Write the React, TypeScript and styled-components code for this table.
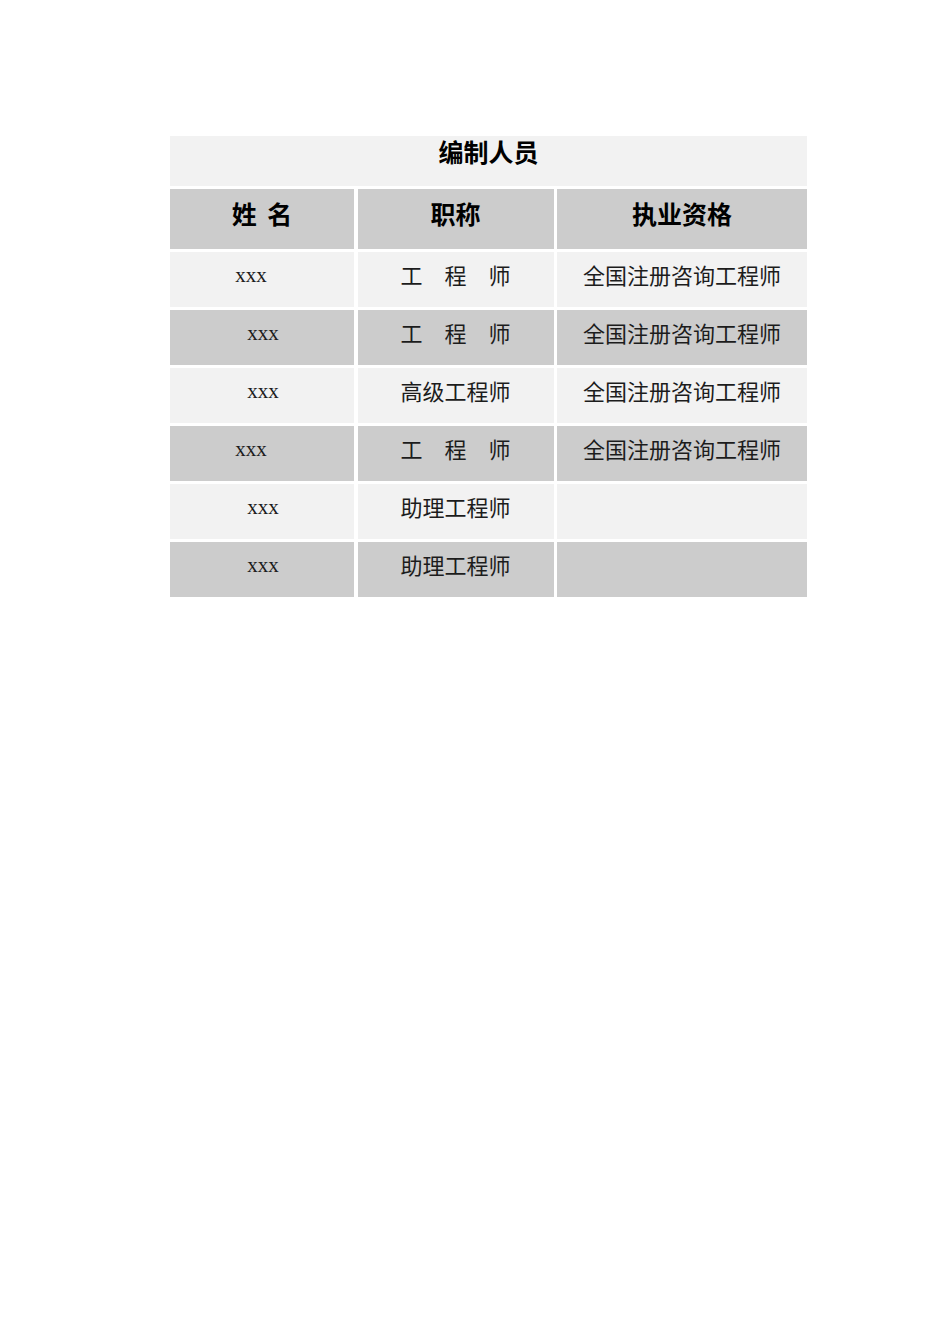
import React from "react";
import styled, { createGlobalStyle } from "styled-components";

const GlobalStyle = createGlobalStyle`
  html, body {
    margin: 0;
    padding: 0;
    background: #ffffff;
  }
  body {
    font-family: "Noto Sans CJK SC", "Noto Sans", sans-serif;
    color: #000;
  }
`;

const Page = styled.div`
  width: 950px;
  min-height: 1344px;
  padding: 136px 0 0 170px;
  box-sizing: border-box;
`;

const Grid = styled.div`
  display: grid;
  width: 637px;
  grid-template-columns: 184px 196px 250px;
  grid-template-rows: 49.5px 59.5px;
  grid-auto-rows: 54.5px;
  gap: 3.5px;
`;

const TitleCell = styled.div`
  grid-column: 1 / -1;
  box-sizing: border-box;
  padding-top: 0px;
  background: #f2f2f2;
  text-align: center;
  font-family: "Noto Sans CJK SC", sans-serif;
  font-weight: 700;
  font-size: 25px;
  line-height: 30px;
`;

const HeadCell = styled.div`
  box-sizing: border-box;
  padding-top: 9px;
  background: #cccccc;
  text-align: center;
  font-family: "Noto Sans CJK SC", sans-serif;
  font-weight: 700;
  font-size: 25px;
  line-height: 30px;
`;

const Gap = styled.span`
  display: inline-block;
  width: 0.42em;
`;

const BodyCell = styled.div<{ $dark: boolean; $shift?: number; $latin?: boolean }>`
  box-sizing: border-box;
  padding-top: ${(p) => (p.$latin ? "8px" : "7px")};
  background: ${(p) => (p.$dark ? "#cccccc" : "#f2f2f2")};
  text-align: center;
  font-family: ${(p) =>
    p.$latin
      ? `"Liberation Serif", "Noto Sans CJK SC", serif`
      : `"Noto Sans CJK SC", serif`};
  font-weight: 400;
  font-size: ${(p) => (p.$latin ? "21px" : "22px")};
  line-height: 30px;
  color: #1c1c1c;
  white-space: pre;
  span.inner {
    position: relative;
    left: ${(p) => p.$shift ?? 0}px;
  }
`;

type Row = { name: string; shift: number; title: string; qual: string };

const rows: Row[] = [
  { name: "xxx", shift: -11, title: "工\u3000程\u3000师", qual: "全国注册咨询工程师" },
  { name: "xxx", shift: 1, title: "工\u3000程\u3000师", qual: "全国注册咨询工程师" },
  { name: "xxx", shift: 1, title: "高级工程师", qual: "全国注册咨询工程师" },
  { name: "xxx", shift: -11, title: "工\u3000程\u3000师", qual: "全国注册咨询工程师" },
  { name: "xxx", shift: 1, title: "助理工程师", qual: "" },
  { name: "xxx", shift: 1, title: "助理工程师", qual: "" },
];

export default function App() {
  return (
    <Page>
      <GlobalStyle />
      <Grid>
        <TitleCell>编制人员</TitleCell>
        <HeadCell>
          姓<Gap />名
        </HeadCell>
        <HeadCell>职称</HeadCell>
        <HeadCell>执业资格</HeadCell>
        {rows.map((r, i) => {
          const dark = i % 2 === 1;
          return (
            <React.Fragment key={i}>
              <BodyCell $dark={dark} $latin $shift={r.shift}>
                <span className="inner">{r.name}</span>
              </BodyCell>
              <BodyCell $dark={dark}>{r.title}</BodyCell>
              <BodyCell $dark={dark}>{r.qual}</BodyCell>
            </React.Fragment>
          );
        })}
      </Grid>
    </Page>
  );
}
